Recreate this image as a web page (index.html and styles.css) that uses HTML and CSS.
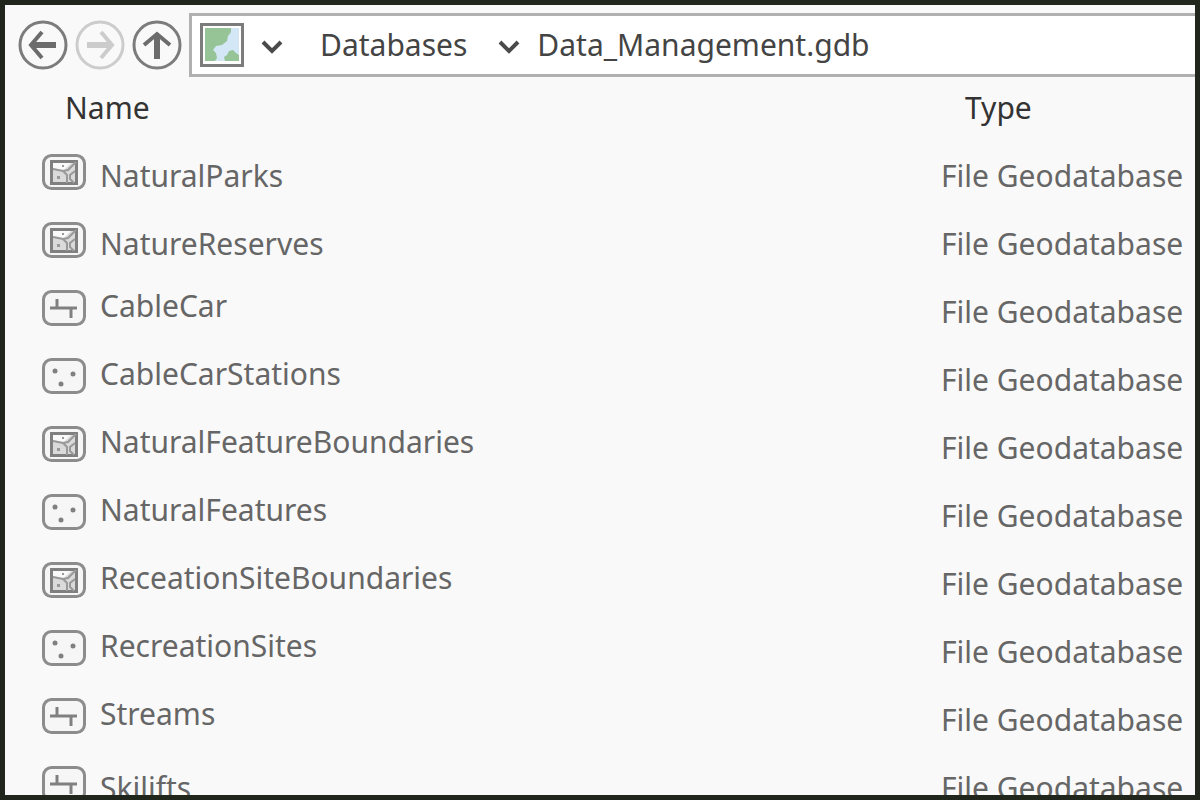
FILE: index.html
```html
<!DOCTYPE html>
<html lang="en">
<head>
  <meta charset="UTF-8">
  <meta name="viewport" content="width=device-width, initial-scale=1.0">
  <title>Data_Management.gdb</title>
  <link rel="stylesheet" href="styles.css">
</head>
<body>
  <!-- Shared icons -->
  <svg class="symbols" aria-hidden="true">
    <symbol id="polygon" viewBox="0 0 44 36">
      <rect x="1.5" y="1.5" width="41" height="33" rx="8" fill="#f6f6f6" stroke="#8c8c8c" stroke-width="3"/>
      <rect x="9.5" y="7.5" width="25" height="22" fill="#dadada" stroke="#808080" stroke-width="3"/>
      <path d="M11 9h18l-7 7-11-2z" fill="#fafafa"/>
      <path d="M11 15l5 1 5 1 5-1 8-8M21 17l4 4v8M33 17l-5 4v4l4 4" fill="none" stroke="#999" stroke-width="2"/>
      <path d="M15 22h3v3h-3zM20 11h2v2h-2z" fill="#999"/>
    </symbol>
    <symbol id="line" viewBox="0 0 44 36">
      <rect x="1.5" y="1.5" width="41" height="33" rx="8" fill="#f6f6f6" stroke="#8c8c8c" stroke-width="3"/>
      <path d="M8 18h27M15 9v9M29 18v10" fill="none" stroke="#808080" stroke-width="3"/>
    </symbol>
    <symbol id="point" viewBox="0 0 44 36">
      <rect x="1.5" y="1.5" width="41" height="33" rx="8" fill="#f6f6f6" stroke="#8c8c8c" stroke-width="3"/>
      <g fill="#808080">
        <circle cx="13" cy="13" r="2.5"/>
        <circle cx="31" cy="16" r="2.5"/>
        <circle cx="19" cy="26" r="2.5"/>
      </g>
    </symbol>
    <symbol id="chevron" viewBox="0 0 24 14">
      <path d="M3 2l9 9 9-9" fill="none" stroke="#4a4a4a" stroke-width="4"/>
    </symbol>
  </svg>

  <div class="toolbar">
    <button type="button" class="nav-btn" aria-label="Back">
      <svg viewBox="0 0 50 50"><circle cx="25" cy="25" r="23"/><path class="arrow" d="M38 25H14"/><path class="head" d="M24 12L13 25l11 13"/></svg>
    </button>
    <button type="button" class="nav-btn" aria-label="Forward" disabled>
      <svg viewBox="0 0 50 50"><circle cx="25" cy="25" r="23"/><path class="arrow" d="M12 25h24"/><path class="head" d="M26 12l11 13-11 13"/></svg>
    </button>
    <button type="button" class="nav-btn" aria-label="Up">
      <svg viewBox="0 0 50 50"><circle cx="25" cy="25" r="23"/><path class="arrow" d="M25 39V14"/><path class="head" d="M12 25l13-11 13 11"/></svg>
    </button>
    <nav class="address">
      <svg class="map-icon" viewBox="0 0 44 44">
        <rect x="1.5" y="1.5" width="41" height="41" fill="#fff" stroke="#7c7c7c" stroke-width="3"/>
        <rect x="5" y="5" width="34" height="33" fill="#d3e7f6"/>
        <path d="M5 5h26v4l-3 4-1 5-5 4-6 1-3 4 3 3 1 5-2 3H5z" fill="#96c496"/>
        <path d="M25 38l-1-4 3-2 2-4 4-1 3 3 3 2v6z" fill="#96c496"/>
      </svg>
      <button type="button" class="drop" aria-label="Locations"><svg><use href="#chevron"/></svg></button>
      <a class="crumb databases" href="#">Databases</a>
      <button type="button" class="drop" aria-label="Databases list"><svg><use href="#chevron"/></svg></button>
      <a class="crumb" href="#">Data_Management.gdb</a>
    </nav>
  </div>

  <table class="items">
    <colgroup>
      <col>
      <col class="type-col">
    </colgroup>
    <thead>
      <tr><th>Name</th><th>Type</th></tr>
    </thead>
    <tbody>
      <tr><td><div class="item"><svg><use href="#polygon"/></svg><span>NaturalParks</span></div></td><td>File Geodatabase</td></tr>
      <tr><td><div class="item"><svg><use href="#polygon"/></svg><span>NatureReserves</span></div></td><td>File Geodatabase</td></tr>
      <tr class="raised"><td><div class="item"><svg><use href="#line"/></svg><span>CableCar</span></div></td><td>File Geodatabase</td></tr>
      <tr class="raised"><td><div class="item"><svg><use href="#point"/></svg><span>CableCarStations</span></div></td><td>File Geodatabase</td></tr>
      <tr class="raised"><td><div class="item"><svg><use href="#polygon"/></svg><span>NaturalFeatureBoundaries</span></div></td><td>File Geodatabase</td></tr>
      <tr class="raised"><td><div class="item"><svg><use href="#point"/></svg><span>NaturalFeatures</span></div></td><td>File Geodatabase</td></tr>
      <tr class="raised"><td><div class="item"><svg><use href="#polygon"/></svg><span>ReceationSiteBoundaries</span></div></td><td>File Geodatabase</td></tr>
      <tr class="raised"><td><div class="item"><svg><use href="#point"/></svg><span>RecreationSites</span></div></td><td>File Geodatabase</td></tr>
      <tr class="raised"><td><div class="item"><svg><use href="#line"/></svg><span>Streams</span></div></td><td>File Geodatabase</td></tr>
      <tr><td><div class="item"><svg><use href="#line"/></svg><span>Skilifts</span></div></td><td>File Geodatabase</td></tr>
    </tbody>
  </table>
</body>
</html>
```

FILE: styles.css
```css
* {
  box-sizing: border-box;
}
body {
  margin: 0;
  height: 100vh;
  overflow: hidden;
  border: 5px solid #21261d;
  background-color: #f9f9f9;
  color: #666;
  font-family: "Noto Sans", sans-serif;
  font-size: 30px;
  line-height: 40px;
}
.symbols {
  display: none;
}
.toolbar {
  display: flex;
  align-items: center;
  gap: 7px;
  padding: 8px 0 0 13px;
}
.nav-btn {
  flex: none;
  width: 50px;
  height: 50px;
  padding: 0;
  border: none;
  background: none;
}
.nav-btn svg {
  display: block;
  width: 50px;
  height: 50px;
  fill: none;
  stroke: #7c7c7c;
  stroke-width: 3;
}
.nav-btn .arrow {
  stroke: #6c6c6c;
  stroke-width: 6;
}
.nav-btn .head {
  stroke: #6c6c6c;
  stroke-width: 4;
}
.nav-btn:disabled svg,
.nav-btn:disabled .arrow,
.nav-btn:disabled .head {
  stroke: #ccc;
}
.address {
  flex: 1;
  display: flex;
  align-items: center;
  height: 64px;
  padding-left: 8px;
  border: 3px solid #b0b0b0;
  border-right: none;
  background-color: #fff;
}
.map-icon {
  flex: none;
  width: 44px;
  height: 44px;
  margin-right: 16px;
}
.drop {
  padding: 4px 0 0;
  border: none;
  background: none;
}
.drop svg {
  display: block;
  width: 24px;
  height: 14px;
}
.crumb {
  margin-left: 16px;
  color: #444;
  text-decoration: none;
}
.databases {
  margin: 0 30px 0 36px;
}
.items {
  width: 100%;
  table-layout: fixed;
  border-collapse: collapse;
}
.type-col {
  width: 254px;
}
th {
  height: 61px;
  padding: 0 0 0 60px;
  color: #333;
  font-weight: 400;
  text-align: left;
}
th + th {
  padding-left: 24px;
}
td {
  height: 68px;
  padding: 8px 0 0;
  white-space: nowrap;
}
td:first-child {
  padding: 0 0 0 37px;
}
.item {
  display: flex;
  align-items: center;
  gap: 14px;
}
.item svg {
  flex: none;
  width: 44px;
  height: 36px;
}
.item span {
  padding-top: 8px;
}
.raised .item span {
  padding: 0 0 4px;
}
```
